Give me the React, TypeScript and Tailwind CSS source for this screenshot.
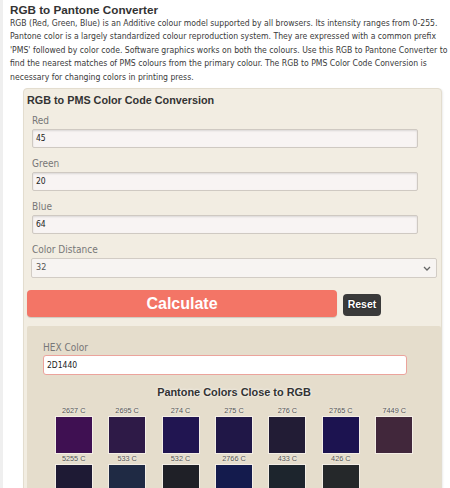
import React from "react";

const swatches: { name: string; color: string }[] = [
  { name: "2627 C", color: "#3f1052" },
  { name: "2695 C", color: "#2e1a47" },
  { name: "274 C", color: "#211551" },
  { name: "275 C", color: "#201747" },
  { name: "276 C", color: "#221c35" },
  { name: "2765 C", color: "#1c1350" },
  { name: "7449 C", color: "#41273b" },
  { name: "5255 C", color: "#1e1a34" },
  { name: "533 C", color: "#1f2a44" },
  { name: "532 C", color: "#1f2027" },
  { name: "2766 C", color: "#141b4d" },
  { name: "433 C", color: "#1d252d" },
  { name: "426 C", color: "#25282a" },
];

function Field({ label, value }: { label: string; value: string }) {
  return (
    <div className="mb-[9px]">
      <div className="text-[10px] leading-[14px] text-[#777] font-['DejaVu_Sans_Condensed','DejaVu_Sans',sans-serif] font-stretch-condensed">
        {label}
      </div>
      <div className="mt-[1px] h-[19px] w-[386px] border border-[#cfc9c2] bg-[#f8f4f3] shadow-[inset_0_1px_2px_rgba(0,0,0,0.12)] rounded-[2px] flex items-center pl-[3px] text-[8.5px] text-[#222] font-['DejaVu_Sans_Condensed','DejaVu_Sans',sans-serif] font-stretch-condensed">
        {value}
      </div>
    </div>
  );
}

export default function App() {
  return (
    <div className="w-[450px] h-[488px] overflow-hidden bg-white border-l-[3px] border-[#efefef] pl-[7px]">
      <div className="pt-[3px] text-[11.7px] leading-[14px] font-bold text-[#333] font-['Liberation_Sans',Arial,sans-serif]">
        RGB to Pantone Converter
      </div>
      <div className="text-[8.6px] leading-[13.4px] text-[#3a3a3a] whitespace-nowrap font-['DejaVu_Sans_Condensed','DejaVu_Sans',sans-serif] font-stretch-condensed">
        <div>RGB (Red, Green, Blue) is an Additive colour model supported by all browsers. Its intensity ranges from 0-255.</div>
        <div>Pantone color is a largely standardized colour reproduction system. They are expressed with a common prefix</div>
        <div>'PMS' followed by color code. Software graphics works on both the colours. Use this RGB to Pantone Converter to</div>
        <div>find the nearest matches of PMS colours from the primary colour. The RGB to PMS Color Code Conversion is</div>
        <div>necessary for changing colors in printing press.</div>
      </div>

      <div className="mt-[4px] ml-[13px] w-[419px] border border-[#e3ddcf] rounded-[4px] bg-[#f2ede2] shadow-[1px_1px_2px_rgba(0,0,0,0.08)] pl-[3px] pt-[4px] pb-[20px]">
        <div className="text-[10.8px] leading-[14px] font-bold text-[#333] font-['Liberation_Sans',Arial,sans-serif]">
          RGB to PMS Color Code Conversion
        </div>
        <div className="mt-[7px] pl-[5px]">
          <Field label="Red" value="45" />
          <Field label="Green" value="20" />
          <Field label="Blue" value="64" />
          <div>
            <div className="text-[10px] leading-[14px] text-[#777] font-['DejaVu_Sans_Condensed','DejaVu_Sans',sans-serif] font-stretch-condensed">
              Color Distance
            </div>
            <div className="relative mt-[1px] h-[20px] w-[406px] ml-[-1px] border border-[#d2ccc5] bg-[#f7f4f2] rounded-[2px] flex items-center pl-[4px] text-[9px] text-[#555] font-['DejaVu_Sans_Condensed','DejaVu_Sans',sans-serif] font-stretch-condensed">
              32
              <svg className="absolute right-[5px] top-[7px]" width="8" height="5" viewBox="0 0 8 5">
                <path d="M1 1 L4 4 L7 1" fill="none" stroke="#666" strokeWidth="1.3" />
              </svg>
            </div>
          </div>
        </div>

        <div className="mt-[12px] flex items-start">
          <div className="w-[310px] h-[27px] rounded-[4px] bg-[#f37566] shadow-[0_1px_1px_rgba(0,0,0,0.15)] flex items-center justify-center text-white font-bold text-[16px] font-['Liberation_Sans',Arial,sans-serif]">
            Calculate
          </div>
          <div className="ml-[6px] mt-[4px] w-[38px] h-[22px] rounded-[4px] bg-[#3a3a3a] flex items-center justify-center text-white font-bold text-[10.5px] [text-shadow:0_0_2px_rgba(0,0,0,0.8)] font-['Liberation_Sans',Arial,sans-serif]">
            Reset
          </div>
        </div>

        <div className="mt-[9px] w-[414px] bg-[#e5ddcc] rounded-[2px] pt-[15px] pb-[10px]">
          <div className="pl-[16px]">
            <div className="text-[10px] leading-[14px] text-[#777] font-['DejaVu_Sans_Condensed','DejaVu_Sans',sans-serif] font-stretch-condensed">
              HEX Color
            </div>
            <div className="h-[20px] w-[364px] border border-[#eba39c] bg-white rounded-[3px] flex items-center pl-[3px] text-[8.5px] text-[#222] font-['DejaVu_Sans_Condensed','DejaVu_Sans',sans-serif] font-stretch-condensed">
              2D1440
            </div>
          </div>
          <div className="mt-[10px] text-center text-[10.9px] leading-[14px] font-bold text-[#333] [text-shadow:0_0_3px_#fff] font-['Liberation_Sans',Arial,sans-serif]">
            Pantone Colors Close to RGB
          </div>
          <div className="mt-[7px] mx-auto w-[374px] grid grid-cols-7">
            {swatches.map((s) => (
              <div key={s.name} className="flex flex-col items-center h-[48px]">
                <div className="text-[7.3px] leading-[10px] text-[#555] [text-shadow:0_0_2px_#fff] font-['Liberation_Sans',Arial,sans-serif]">
                  {s.name}
                </div>
                <div className="w-[38px] h-[38px] border border-[#f4eee6]">
                  <div className="w-full h-full" style={{ backgroundColor: s.color }} />
                </div>
              </div>
            ))}
          </div>
        </div>
      </div>
    </div>
  );
}
